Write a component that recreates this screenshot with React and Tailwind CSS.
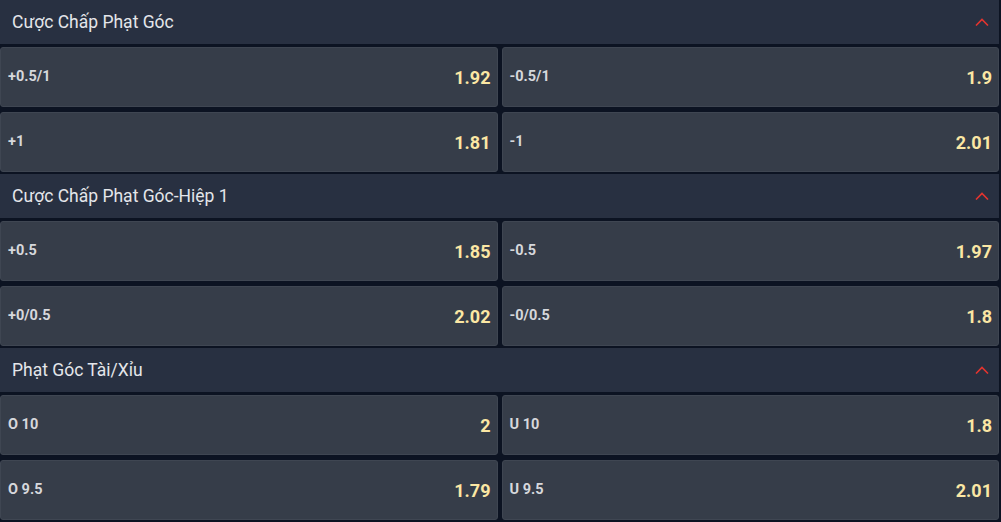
const SECTIONS = [
  {
    title: 'Cược Chấp Phạt Góc',
    rows: [
      [{ label: '+0.5/1', odds: '1.92' }, { label: '-0.5/1', odds: '1.9' }],
      [{ label: '+1', odds: '1.81' }, { label: '-1', odds: '2.01' }],
    ],
  },
  {
    title: 'Cược Chấp Phạt Góc-Hiệp 1',
    rows: [
      [{ label: '+0.5', odds: '1.85' }, { label: '-0.5', odds: '1.97' }],
      [{ label: '+0/0.5', odds: '2.02' }, { label: '-0/0.5', odds: '1.8' }],
    ],
  },
  {
    title: 'Phạt Góc Tài/Xỉu',
    rows: [
      [{ label: 'O 10', odds: '2' }, { label: 'U 10', odds: '1.8' }],
      [{ label: 'O 9.5', odds: '1.79' }, { label: 'U 9.5', odds: '2.01' }],
    ],
  },
]

const Chevron = () => (
  <svg width="14" height="8" viewBox="0 0 14 8" className="block">
    <path d="M1 7.5 L7 1.5 L13 7.5" fill="none" stroke="#e3342f" strokeWidth="1.6" />
  </svg>
)

const OddsCell = ({ label, odds }) => (
  <div className="flex h-[60px] items-center justify-between rounded-[3px] border border-[#3f4652] bg-[#363d49] pl-[7px] pr-[6px]">
    <span className="text-[14.5px] font-bold text-[#d6d8dc]">{label}</span>
    <span className="pt-[1px] text-[18px] font-bold text-[#fbe7a4]">{odds}</span>
  </div>
)

export default function App() {
  return (
    <div className="h-[522px] w-[1001px] overflow-hidden bg-[#0c1322] pr-[2px] font-['Roboto','Liberation_Sans',sans-serif]">
      {SECTIONS.map((s) => (
        <div key={s.title} className="mb-[2px]">
          <div className="mb-[3px] flex h-[44px] items-center justify-between bg-[#283041] pl-[12px] pr-[10px]">
            <span className="text-[17.5px] text-[#e4e6ea]">{s.title}</span>
            <Chevron />
          </div>
          <div className="grid grid-cols-2 gap-x-[4px] gap-y-[5px]">
            {s.rows.flat().map((c) => (
              <OddsCell key={c.label} {...c} />
            ))}
          </div>
        </div>
      ))}
    </div>
  )
}
